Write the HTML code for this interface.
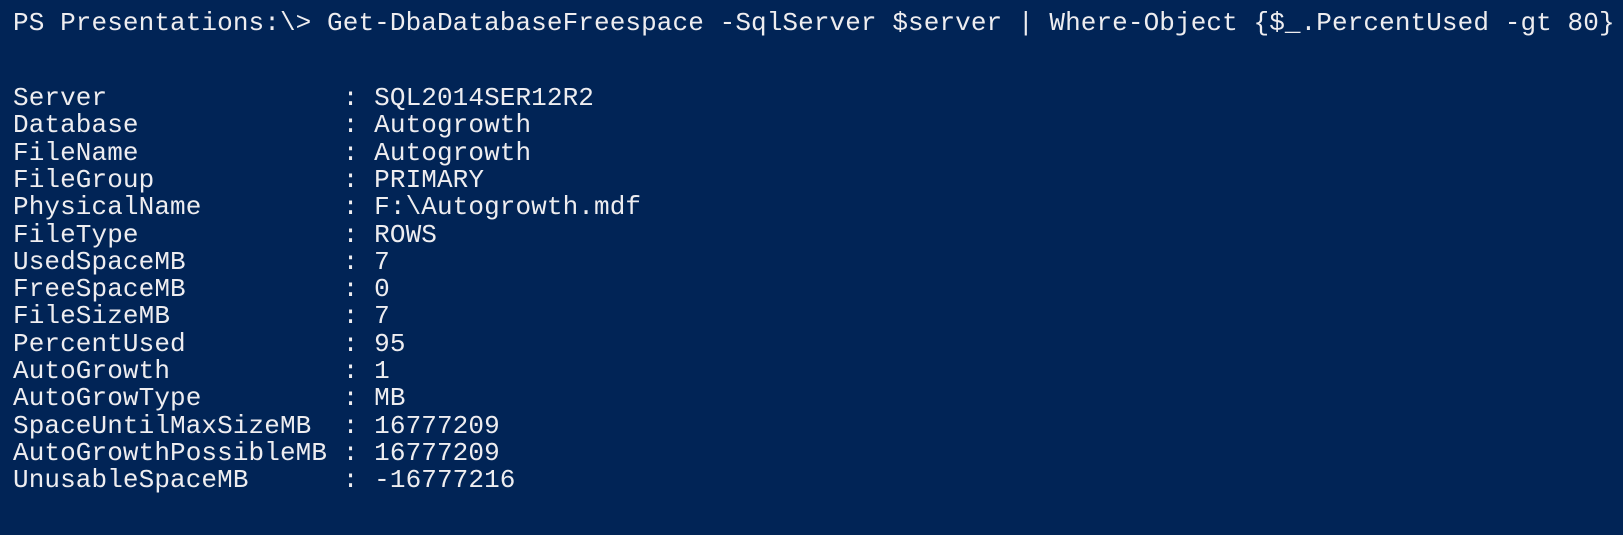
<!DOCTYPE html>
<html><head><style>
html,body{margin:0;padding:0;width:1623px;height:535px;background:#012456;overflow:hidden}
div{position:absolute;left:13px;margin:0;font-family:"Liberation Mono",monospace;font-size:26px;letter-spacing:0.1px;line-height:30px;color:#eeedf0;white-space:pre}
</style></head><body>
<div style="top:8px">PS Presentations:\&gt; Get-DbaDatabaseFreespace -SqlServer $server | Where-Object {$_.PercentUsed -gt 80}</div>
<div style="top:83px">Server               : SQL2014SER12R2</div>
<div style="top:110.3px">Database             : Autogrowth</div>
<div style="top:137.6px">FileName             : Autogrowth</div>
<div style="top:164.9px">FileGroup            : PRIMARY</div>
<div style="top:192.2px">PhysicalName         : F:\Autogrowth.mdf</div>
<div style="top:219.5px">FileType             : ROWS</div>
<div style="top:246.8px">UsedSpaceMB          : 7</div>
<div style="top:274.1px">FreeSpaceMB          : 0</div>
<div style="top:301.4px">FileSizeMB           : 7</div>
<div style="top:328.7px">PercentUsed          : 95</div>
<div style="top:356px">AutoGrowth           : 1</div>
<div style="top:383.3px">AutoGrowType         : MB</div>
<div style="top:410.6px">SpaceUntilMaxSizeMB  : 16777209</div>
<div style="top:437.9px">AutoGrowthPossibleMB : 16777209</div>
<div style="top:465.2px">UnusableSpaceMB      : -16777216</div>
</body></html>
